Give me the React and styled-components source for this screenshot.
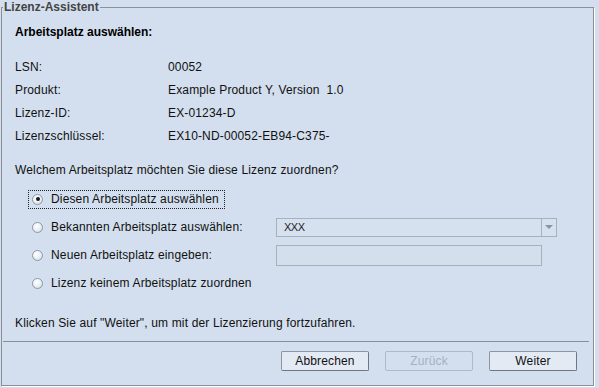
import styled, { createGlobalStyle } from 'styled-components'

const GlobalStyle = createGlobalStyle`
  html, body {
    margin: 0;
    padding: 0;
    background: #d3dfee;
  }
  body {
    font-family: "Liberation Sans", Arial, sans-serif;
    font-size: 12px;
    color: #111;
  }
`

const Page = styled.div`
  width: 599px;
  height: 388px;
  background: #d3dfee;
  box-sizing: border-box;
  overflow: hidden;
  letter-spacing: 0.15px;
`

const Frame = styled.fieldset`
  margin: 0 0 0 1px;
  width: 593px;
  height: 386px;
  box-sizing: border-box;
  padding: 0;
  border: 1px solid #8b9098;
  box-shadow: 1px 1px 0 #ffffff;
  display: flex;
  flex-direction: column;
`

const Title = styled.legend`
  margin-left: 1px;
  padding: 0 1px;
  font-weight: bold;
  font-size: 12px;
  line-height: 14px;
  letter-spacing: 0;
  color: #444;
`

const Body = styled.div`
  padding: 7px 0 0 13px;
  display: flex;
  flex-direction: column;
`

const Heading = styled.div`
  font-weight: bold;
  line-height: 23px;
  letter-spacing: 0;
  color: #000;
`

const InfoGrid = styled.div`
  margin-top: 11px;
  display: grid;
  grid-template-columns: 153px 1fr;
  grid-auto-rows: 23px;
  align-items: center;
`

const Text = styled.div`
  line-height: 23px;
  margin-top: ${p => p.$top || 0}px;
`

const Pre = styled.span`
  white-space: pre;
`

const RadioGroup = styled.div`
  margin: 3px 0 0 13px;
  display: grid;
  grid-template-columns: 248px auto;
  grid-auto-rows: 28px;
  align-items: center;
`

const RadioLabel = styled.label`
  display: inline-flex;
  align-items: center;
  gap: 8px;
  height: 17px;
  padding: 0 5px 0 3px;
  justify-self: start;
  border: 1px dotted ${p => (p.$focus ? '#222' : 'transparent')};
  white-space: nowrap;
`

const Circle = styled.span`
  width: 11px;
  height: 11px;
  box-sizing: border-box;
  border-radius: 50%;
  border: 1px solid #8e99a7;
  background: radial-gradient(circle at 40% 35%, #ffffff 0%, #eef2f7 45%, #c9d3df 100%);
  display: flex;
  align-items: center;
  justify-content: center;
  &::after {
    content: '';
    width: 4px;
    height: 4px;
    border-radius: 50%;
    background: ${p => (p.$checked ? '#1a1a1a' : 'transparent')};
  }
`

const Combo = styled.div`
  width: 281px;
  height: 19px;
  box-sizing: border-box;
  border: 1px solid #a8b0bb;
  background: #d6e1ef;
  display: flex;
  align-items: stretch;
`

const ComboText = styled.div`
  flex: 1;
  padding-left: 7px;
  line-height: 17px;
  color: #222;
  font-size: 11px;
  letter-spacing: -0.5px;
`

const ComboArrow = styled.div`
  width: 14px;
  border-left: 1px solid #a8b0bb;
  display: flex;
  align-items: center;
  justify-content: center;
  &::after {
    content: '';
    border-left: 4px solid transparent;
    border-right: 4px solid transparent;
    border-top: 4px solid #8a939f;
  }
`

const Field = styled.div`
  width: 266px;
  height: 21px;
  box-sizing: border-box;
  border: 1px solid #a8b0bb;
  background: #d4dfee;
`

const Separator = styled.hr`
  margin: 6px 4px 0 1px;
  border: 0;
  border-top: 1px solid #8a8f96;
  height: 0;
`

const ButtonBar = styled.div`
  display: flex;
  justify-content: flex-end;
  gap: 16px;
  padding: 9px 16px 0 0;
`

const Button = styled.button`
  width: 88px;
  height: 20px;
  box-sizing: border-box;
  padding: 0;
  font-family: "Liberation Sans", Arial, sans-serif;
  font-size: 12px;
  letter-spacing: 0.15px;
  color: ${p => (p.disabled ? '#a6b0bd' : '#111')};
  background: ${p => (p.disabled ? '#d3dfee' : '#e3eaf4')};
  border: 1px solid ${p => (p.disabled ? '#b0b9c5' : '#8e959f')};
  border-right-color: ${p => (p.disabled ? '#b0b9c5' : '#6f7680')};
  border-bottom-color: ${p => (p.disabled ? '#b0b9c5' : '#6f7680')};
  border-radius: 2px;
`

const info = [
  ['LSN:', '00052'],
  ['Produkt:', 'Example Product Y, Version  1.0'],
  ['Lizenz-ID:', 'EX-01234-D'],
  ['Lizenzschlüssel:', 'EX10-ND-00052-EB94-C375-'],
]

const App = () => {
  return (
    <Page>
      <GlobalStyle />
      <Frame>
        <Title>Lizenz-Assistent</Title>
        <Body>
          <Heading>Arbeitsplatz auswählen:</Heading>
          <InfoGrid>
            {info.map(([k, v]) => [
              <Pre key={k}>{k}</Pre>,
              <Pre key={k + 'v'}>{v}</Pre>,
            ])}
          </InfoGrid>
          <Text $top={12}>Welchem Arbeitsplatz möchten Sie diese Lizenz zuordnen?</Text>
          <RadioGroup>
            <RadioLabel $focus>
              <Circle $checked />
              Diesen Arbeitsplatz auswählen
            </RadioLabel>
            <span />
            <RadioLabel>
              <Circle />
              Bekannten Arbeitsplatz auswählen:
            </RadioLabel>
            <Combo>
              <ComboText>XXX</ComboText>
              <ComboArrow />
            </Combo>
            <RadioLabel>
              <Circle />
              Neuen Arbeitsplatz eingeben:
            </RadioLabel>
            <Field />
            <RadioLabel>
              <Circle />
              Lizenz keinem Arbeitsplatz zuordnen
            </RadioLabel>
            <span />
          </RadioGroup>
          <Text $top={15}>Klicken Sie auf "Weiter", um mit der Lizenzierung fortzufahren.</Text>
        </Body>
        <Separator />
        <ButtonBar>
          <Button>Abbrechen</Button>
          <Button disabled>Zurück</Button>
          <Button>Weiter</Button>
        </ButtonBar>
      </Frame>
    </Page>
  )
}

export default App
